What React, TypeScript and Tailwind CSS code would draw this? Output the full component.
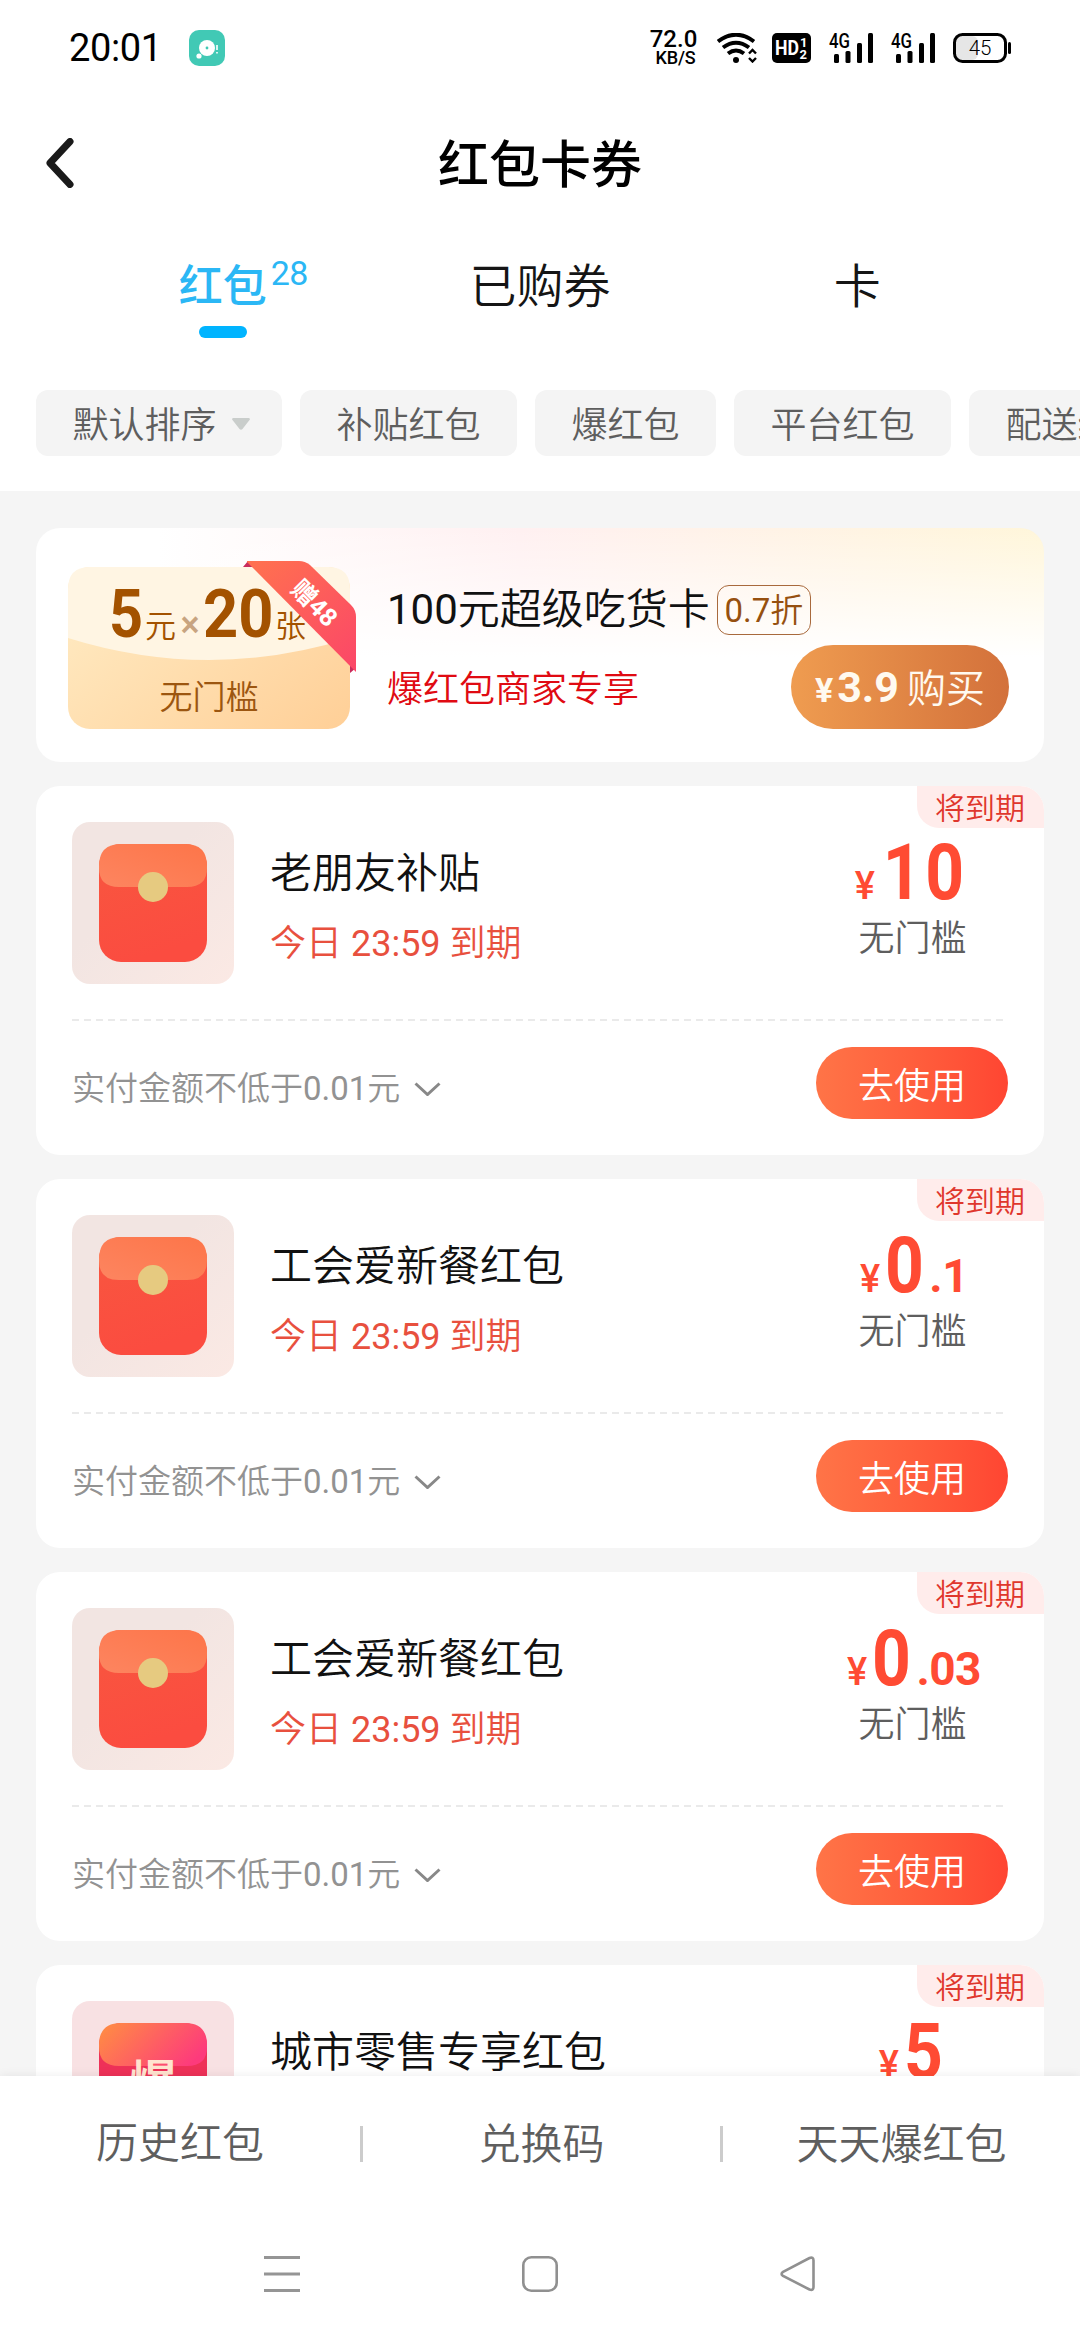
import type { ReactNode } from "react";

interface Coupon {
  id: number;
  title: string;
  whole: string;
  decimal?: string;
  hot?: boolean;
}

const FILTERS = ["补贴红包", "爆红包", "平台红包", "配送红包"];

const COUPONS: Coupon[] = [
  { id: 1, title: "老朋友补贴", whole: "10" },
  { id: 2, title: "工会爱新餐红包", whole: "0", decimal: ".1" },
  { id: 3, title: "工会爱新餐红包", whole: "0", decimal: ".03" },
  { id: 4, title: "城市零售专享红包", whole: "5", hot: true },
];

function SignalIcon() {
  return (
    <svg width="44" height="30" viewBox="0 0 44 30" className="overflow-visible">
      <text x="0" y="15" fontSize="20" fontWeight="500" textLength="21" lengthAdjust="spacingAndGlyphs">4G</text>
      <rect x="5" y="21" width="5" height="9" rx="1.5" />
      <rect x="16.5" y="18" width="5" height="12" rx="1.5" />
      <rect x="28" y="10" width="5" height="20" rx="1.5" />
      <rect x="39" y="0" width="5" height="30" rx="1.5" />
    </svg>
  );
}

function StatusBar() {
  return (
    <div className="flex h-24 items-center pl-[69px] pr-[69px] font-normal text-black">
      <span className="w-[120px] text-[38px] leading-none tracking-[-0.4px]">20:01</span>
      <svg width="36" height="36" viewBox="0 0 36 36">
        <rect width="36" height="36" rx="10" fill="#41c9b5" />
        <circle cx="18" cy="18" r="8" fill="#fff" />
        <circle cx="10" cy="26" r="2.6" fill="#fff" />
        <circle cx="18" cy="18" r="1.4" fill="#41c9b5" />
        <path d="M28 15v5M28 22v1.5" stroke="#fff" strokeWidth="1.6" />
      </svg>
      <div className="ml-auto flex items-center">
        <div className="flex w-[49px] flex-col items-center font-medium">
          <span className="text-[24px] leading-[20px]">72.0</span>
          <span className="pl-1 text-[18px] leading-[18px] tracking-[-0.2px]">KB/S</span>
        </div>
        <svg width="40" height="30" viewBox="0 0 40 30" fill="none" stroke="#000" className="ml-[19px]">
          <path d="M1 8.5Q19 -5 37 8.5" strokeWidth="4" />
          <path d="M6 14.5Q19 5 32 14.5" strokeWidth="4" />
          <path d="M11 20.5Q19 14.5 27 20.5" strokeWidth="4" />
          <circle cx="19" cy="27" r="3" fill="#000" stroke="none" />
          <path d="M32 20.5l3.5-3.5 3.5 3.5M32 25l3.5 3.5 3.5-3.5" strokeWidth="2.4" />
        </svg>
        <svg width="39" height="30" viewBox="0 0 39 30" className="ml-[15px]">
          <rect width="39" height="30" rx="5" />
          <text x="3" y="22" fontSize="21" fontWeight="700" fill="#fff" textLength="24" lengthAdjust="spacingAndGlyphs">HD</text>
          <text x="28" y="14" fontSize="13" fontWeight="700" fill="#fff">1</text>
          <text x="27.5" y="26" fontSize="13" fontWeight="700" fill="#fff">2</text>
        </svg>
        <div className="ml-[18px] flex gap-[18px]">
          <SignalIcon />
          <SignalIcon />
        </div>
        <svg width="58" height="30" viewBox="0 0 58 30" className="ml-[18px]">
          <rect x="3" y="3" width="22" height="24" rx="6" fill="#e6e6e6" />
          <rect x="1.5" y="1.5" width="51" height="27" rx="8" fill="none" stroke="#000" strokeWidth="3" />
          <rect x="55" y="9" width="3" height="12" rx="1.5" />
          <text x="27" y="22" fontSize="20.5" fontWeight="300" textAnchor="middle">45</text>
        </svg>
      </div>
    </div>
  );
}

function TitleBar() {
  return (
    <header className="grid h-[134px] grid-cols-[1fr_auto_1fr] items-center px-[46px]">
      <svg width="28" height="50" viewBox="0 0 28 50" fill="none" stroke="#1a1a1a" strokeWidth="7" strokeLinecap="round" strokeLinejoin="round">
        <path d="M24 3.5L4 25l20 21.5" />
      </svg>
      <h1 className="pt-1 text-[51px] font-medium leading-none text-black">红包卡券</h1>
    </header>
  );
}

function Tabs() {
  return (
    <nav className="grid h-[160px] grid-cols-3 px-16 pt-[29px] text-[47px] leading-[56px] text-[#151515]">
      <div className="flex flex-col items-center gap-[11px]">
        <div className="relative text-[44px] font-medium text-[#2bb7f5]">
          红包
          <span className="absolute -top-[8px] left-[92px] text-[34px] font-normal leading-[44px] tracking-[-0.6px]">28</span>
        </div>
        <span className="h-3 w-12 rounded-full bg-[#00b4ff]" />
      </div>
      <div className="text-center">已购券</div>
      <div className="text-center">卡</div>
    </nav>
  );
}

function Chip({ children }: { children: ReactNode }) {
  return (
    <div className="flex h-[66px] shrink-0 items-center rounded-xl bg-[#f4f4f4] px-[36.5px] pt-[5px] text-[36px] leading-none text-[#5e5e5e]">
      {children}
    </div>
  );
}

function PromoCard() {
  return (
    <section className="flex h-[234px] shrink-0 rounded-[24px] bg-[linear-gradient(to_bottom,rgba(255,255,255,0)_0%,#fff_55%),linear-gradient(to_right,#fff_12%,#fff0f1_48%,#fff6da_100%)] pl-8">
      <div className="relative mt-[39px] h-[162px] w-[282px] overflow-visible text-[#a35200]">
        <svg width="282" height="162" viewBox="0 0 282 162" className="absolute inset-0">
          <defs>
            <linearGradient id="ticket" x1="0" y1="0.3" x2="1" y2="1">
              <stop offset="0" stopColor="#ffe9c0" />
              <stop offset="1" stopColor="#ffcf97" />
            </linearGradient>
          </defs>
          <rect width="282" height="162" rx="22" fill="url(#ticket)" />
          <path d="M0 22Q0 0 22 0H260Q282 0 282 22V71Q141 115 0 71Z" fill="#fff5e3" />
        </svg>
        <div className="relative flex h-[74px] items-baseline pl-[41px] pt-[8px] leading-[79px]">
          <span className="w-[36px] origin-left scale-x-90 text-[66px] font-bold">5</span>
          <span className="w-[32px] text-[31px]">元</span>
          <span className="w-[26px] text-center text-[36px] font-medium text-[#c8a480]">×</span>
          <span className="w-[72px] origin-left scale-x-[0.93] text-[66px] font-bold">20</span>
          <span className="text-[31px]">张</span>
        </div>
        <div className="relative mt-[32px] text-center text-[33px] leading-[50px] text-[#9c5610]">无门槛</div>
        <svg width="114" height="114" viewBox="0 0 114 114" className="absolute -top-[6px] left-[175px]">
          <defs>
            <linearGradient id="ribbon" x1="0.1" y1="0" x2="1" y2="1">
              <stop offset="0" stopColor="#ff7050" />
              <stop offset="1" stopColor="#fb4668" />
            </linearGradient>
          </defs>
          <path d="M0 6L5 0H12V6ZM113 107L107 112V100Z" fill="#c92c5c" />
          <path d="M4 0H56Q62 0 67 4L108 44Q113 49 113 56V111L4 1Z" fill="url(#ribbon)" />
          <text x="0" y="0" transform="translate(71.5 42) rotate(45)" dy="9" textAnchor="middle" fontSize="25" fontWeight="700" fill="#fff">赠48</text>
        </svg>
      </div>

      <div className="flex flex-1 flex-col pl-[37px] pr-[35px] pt-[56px]">
        <div className="flex items-center gap-[7px]">
          <h2 className="pt-px text-[42px] leading-[50px] text-[#111]">
            <span className="font-normal">100</span>元超级吃货卡
          </h2>
          <span className="flex h-[50px] w-[94px] items-center justify-center rounded-xl border-[1.5px] border-[#a8693c] pt-0.5 text-[33px] leading-none text-[#96500f]">
            <span className="font-normal">0.7</span>折
          </span>
        </div>
        <div className="mt-[10px] flex items-center justify-between">
          <span className="pt-[6px] text-[36px] leading-none text-[#e00a12]">爆红包商家专享</span>
          <button className="flex h-[84px] w-[218px] items-baseline justify-center rounded-full bg-linear-to-r from-[#ef9c50] to-[#d3713b] leading-[84px] text-[#fffaf0]">
            <span className="mr-1 text-[34px] font-bold">¥</span>
            <span className="mr-2 text-[43px] font-bold">3.9</span>
            <span className="text-[39px]">购买</span>
          </button>
        </div>
      </div>
    </section>
  );
}

function Envelope({ hot }: { hot?: boolean }) {
  return (
    <svg width="162" height="162" viewBox="0 0 162 162" className="shrink-0">
      <defs>
        <linearGradient id="tile" x1="0" y1="0" x2="1" y2="1">
          <stop offset="0.4" stopColor="#f2e5e2" />
          <stop offset="1" stopColor="#fbe9e4" />
        </linearGradient>
        <linearGradient id="flap" x1="0" y1="1" x2="1" y2="0">
          <stop offset="0" stopColor="#fd8560" />
          <stop offset="1" stopColor="#fd7549" />
        </linearGradient>
        <linearGradient id="body" x1="0" y1="0" x2="0.3" y2="1">
          <stop offset="0" stopColor="#f8573f" />
          <stop offset="1" stopColor="#fb4c40" />
        </linearGradient>
        <linearGradient id="hotFlap" x1="0" y1="0.2" x2="1" y2="0.6">
          <stop offset="0" stopColor="#ff8a45" />
          <stop offset="1" stopColor="#fd3a7c" />
        </linearGradient>
      </defs>
      <rect width="162" height="162" rx="18" fill={hot ? "#f8e1e3" : "url(#tile)"} />
      <rect x="27" y="22" width="108" height="118" rx="22" fill={hot ? "#ee3158" : "url(#body)"} />
      <path
        d="M27 44Q27 22 49 22H113Q135 22 135 44V46Q135 65 115 65H47Q27 65 27 46Z"
        fill={hot ? "url(#hotFlap)" : "url(#flap)"}
      />
      {hot ? (
        <text x="81" y="99" textAnchor="middle" fontSize="48" fontWeight="700" fill="#ffe3cf">爆</text>
      ) : (
        <circle cx="81" cy="65" r="15" fill="#e6ca80" />
      )}
    </svg>
  );
}

function CouponCard({ coupon }: { coupon: Coupon }) {
  return (
    <article className="relative h-[369px] shrink-0 rounded-[24px] bg-white px-9 pt-9">
      <span className="absolute right-0 top-0 h-[42px] w-[127px] rounded-bl-[22px] rounded-tr-[24px] bg-[#ffeceb] pl-[18px] pt-[2px] text-[30px] leading-[42px] text-[#df372d]">
        将到期
      </span>
      <div className="flex h-[198px]">
        <Envelope hot={coupon.hot} />
        <div className="flex-1 pl-9 pt-[26px]">
          <h3 className="text-[42px] leading-[52px] text-[#111]">{coupon.title}</h3>
          <p className="mt-[22px] text-[36px] leading-[44px] text-[#e8503e]">
            今日<span className="font-normal"> 23:59 </span>到期
          </p>
        </div>
        <div className="w-[192px] whitespace-nowrap text-center">
          <div className="flex h-[92px] items-baseline justify-center pl-[4px] font-bold leading-[102px] text-[#ff4b33]">
            <span className="mr-[2px] text-[38px] font-medium">¥</span>
            <span className="scale-x-[0.88] text-[77px] tracking-[4px]">{coupon.whole}</span>
            {coupon.decimal && <span className="-ml-px text-[46px] tracking-[-0.5px]">{coupon.decimal}</span>}
          </div>
          <div className="pl-px text-[36px] leading-[50px] text-[#5e5e5e]">无门槛</div>
        </div>
      </div>
      <div className="-mt-px mr-[5px] h-[2px] bg-[repeating-linear-gradient(to_right,#eaeaea_0_7px,transparent_7px_12px)]" />
      <div className="flex h-[124px] items-center justify-between">
        <div className="flex items-center pt-[11px] text-[33px] leading-none text-[#929292]">
          实付金额不低于<span className="font-normal">0.01</span>元
          <svg width="27" height="14" viewBox="0 0 27 14" fill="none" stroke="#888" strokeWidth="3" className="ml-[14px]">
            <path d="M1.5 1.5l12 11 12-11" />
          </svg>
        </div>
        <button className="h-[72px] w-[192px] rounded-full bg-linear-to-r from-[#ff7447] to-[#ff4532] pt-[7px] text-[36px] leading-none text-white">
          去使用
        </button>
      </div>
    </article>
  );
}

function BottomBar() {
  return (
    <footer className="z-10 h-[264px] shrink-0 bg-white shadow-[0_0_10px_rgba(0,0,0,0.08)]">
      <div className="grid h-[132px] grid-cols-3 items-center pt-[3px] text-center text-[42px] leading-[38px] text-[#5e5e5e]">
        <span>历史红包</span>
        <span className="h-9 border-l-[3px] border-[#ccc]">兑换码</span>
        <span className="h-9 border-l-[3px] border-[#ccc]">天天爆红包</span>
      </div>
      <div className="flex items-center gap-[222px] pl-[264px] pt-12">
        <svg width="36" height="36" viewBox="0 0 36 36" stroke="#959595" strokeWidth="3">
          <path d="M0 1.5h36M0 18h36M0 34.5h36" />
        </svg>
        <svg width="36" height="36" viewBox="0 0 36 36" fill="none" stroke="#909090" strokeWidth="2.6">
          <rect x="1.3" y="1.3" width="33.4" height="33.4" rx="8" />
        </svg>
        <svg width="36" height="36" viewBox="0 0 36 36" fill="none" stroke="#909090" strokeWidth="2.6">
          <path d="M2.6 16.2L29.5 2Q33.5 .5 33.5 4.5V31Q33.5 35 29.5 33.5L2.6 19.6Q.6 18 2.6 16.2Z" />
        </svg>
      </div>
    </footer>
  );
}

export default function App() {
  return (
    <div className="flex h-[2340px] w-[1080px] flex-col overflow-hidden bg-[#f5f5f5] font-['Roboto','Noto_Sans_CJK_SC',sans-serif] font-[360]">
      <div className="h-[491px] shrink-0 bg-white">
        <StatusBar />
        <TitleBar />
        <Tabs />
        <div className="flex gap-[18px] overflow-hidden pl-9">
          <Chip>
            默认排序
            <svg width="18" height="12" viewBox="0 0 18 12" className="-mr-1 -mt-1 ml-[15px]">
              <path d="M1 0h16q1.5 1 .5 2L10.5 11q-1.5 1.5-3 0L.5 2Q-.5 1 1 0Z" fill="#c9cdcb" />
            </svg>
          </Chip>
          {FILTERS.map((name) => (
            <Chip key={name}>{name}</Chip>
          ))}
        </div>
      </div>

      <main className="flex min-h-0 flex-1 flex-col gap-6 overflow-hidden px-9 pt-[37px]">
        <PromoCard />
        {COUPONS.map((coupon) => (
          <CouponCard key={coupon.id} coupon={coupon} />
        ))}
      </main>

      <BottomBar />
    </div>
  );
}
